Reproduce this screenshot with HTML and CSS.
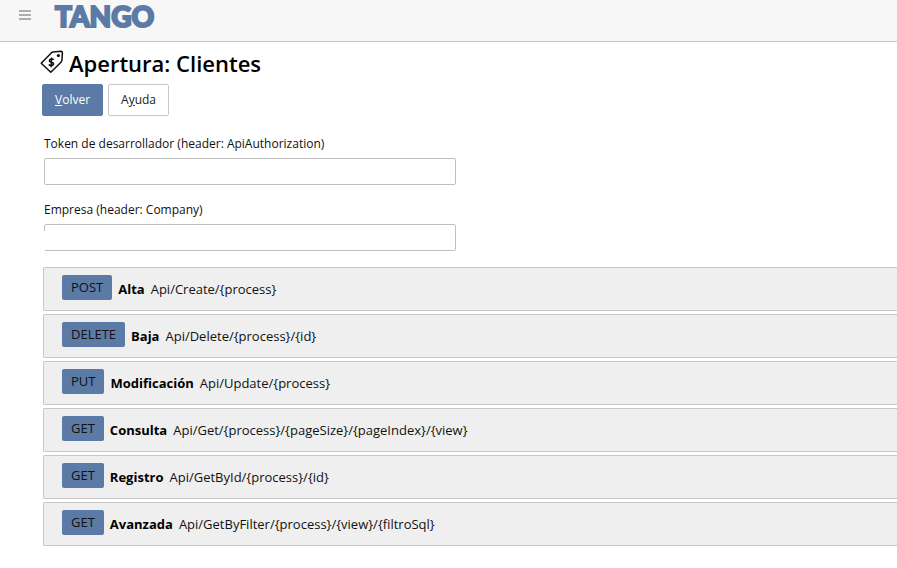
FILE: index.html
```html
<!DOCTYPE html>
<html lang="es">
<head>
<meta charset="utf-8">
<meta name="viewport" content="width=device-width, initial-scale=1">
<title>Apertura: Clientes</title>
<link rel="stylesheet" href="styles.css">
</head>
<body>
<header class="topbar">
  <button class="menu" type="button" aria-label="Menú">
    <svg width="12" height="10" viewBox="0 0 12 10" aria-hidden="true"><path d="M0 1h12M0 5h12M0 9h12" stroke="#969696" stroke-width="1.6"/></svg>
  </button>
  <a class="brand" href="#">TANGO</a>
</header>
<main class="content">
  <h1 class="title">
    <svg class="tag" width="24" height="24" viewBox="0 0 24 24" fill="none" aria-hidden="true">
      <path d="M1.2 13.2 11.5 2.8Q12.2 2.1 13.2 2L21 1.3Q22.4 1.3 22.4 2.6L21.9 10.2Q21.8 11.4 21 12.2L10.8 22.2Z" stroke="#111" stroke-width="1.5" stroke-linejoin="round"/>
      <circle cx="18.4" cy="5.6" r="1.6" fill="#111"/>
      <path d="M13.7 9.7C12.6 8.5 9.2 8.7 9.4 10.8C9.6 12.6 13.5 11.6 13.5 13.8C13.5 16.1 9.8 15.9 8.8 14.6M11.6 7.5 11.1 17.2" stroke="#111" stroke-width="1.6"/>
    </svg>
    Apertura: Clientes
  </h1>
  <div class="actions">
    <button class="btn btn-primary" type="button"><u>V</u>olver</button>
    <button class="btn" type="button">A<u>y</u>uda</button>
  </div>
  <form class="fields">
    <div class="field">
      <label for="token">Token de desarrollador (header: ApiAuthorization)</label>
      <div class="box"><input id="token" type="text"></div>
    </div>
    <div class="field">
      <label for="company">Empresa (header: Company)</label>
      <div class="box box-open"><input id="company" type="text"></div>
    </div>
  </form>
  <ul class="endpoints">
    <li class="endpoint"><span class="method">POST</span><strong>Alta</strong><span>Api/Create/{process}</span></li>
    <li class="endpoint"><span class="method">DELETE</span><strong>Baja</strong><span>Api/Delete/{process}/{id}</span></li>
    <li class="endpoint"><span class="method">PUT</span><strong>Modificación</strong><span>Api/Update/{process}</span></li>
    <li class="endpoint"><span class="method">GET</span><strong>Consulta</strong><span>Api/Get/{process}/{pageSize}/{pageIndex}/{view}</span></li>
    <li class="endpoint"><span class="method">GET</span><strong>Registro</strong><span>Api/GetById/{process}/{id}</span></li>
    <li class="endpoint"><span class="method">GET</span><strong>Avanzada</strong><span>Api/GetByFilter/{process}/{view}/{filtroSql}</span></li>
  </ul>
</main>
</body>
</html>
```
FILE: styles.css
```css
* { box-sizing: border-box; }

body {
  margin: 0;
  background: #fff;
  color: #111;
  font: 13px/18px "Open Sans", "Noto Sans", sans-serif;
}

.topbar {
  display: flex;
  align-items: flex-start;
  gap: 24px;
  height: 42px;
  padding-left: 19px;
  background: #f7f7f7;
  border-bottom: 1px solid #c8c8c8;
}

.menu {
  display: flex;
  padding: 10px 0;
  border: 0;
  background: none;
}

.brand {
  color: #5b7ba6;
  font: 900 28px/32px Lato, sans-serif;
  text-decoration: none;
  -webkit-text-stroke: 2px #5b7ba6;
}

.content { padding: 7px 0 20px 43px; }

.title {
  display: flex;
  align-items: center;
  gap: 5px;
  margin: 0 0 7px -3px;
  color: #000;
  font-size: 22px;
  font-weight: 600;
  line-height: 28px;
}

.tag { margin-bottom: 3px; }

.actions {
  display: flex;
  gap: 5px;
  margin: 0 0 19px -1px;
}

.btn {
  height: 32px;
  padding: 0 12px;
  border: 1px solid #c8c8c8;
  border-radius: 2px;
  background: #fff;
  color: #222;
  font: inherit;
  font-size: 12px;
}

.btn-primary {
  border-color: #5b7ba6;
  background: #5b7ba6;
  color: #fff;
}

.fields {
  display: grid;
  gap: 16px;
  margin: 0 0 16px 1px;
}

.field {
  display: grid;
  gap: 5px;
  max-width: 412px;
  font-size: 12px;
}

.box {
  position: relative;
  display: grid;
}

.box input {
  width: 100%;
  height: 27px;
  padding: 0 8px;
  border: 1px solid #c0c0c0;
  border-radius: 2px;
  font: inherit;
}

/* The left edge is hidden below the top corner. */
.box-open::before {
  content: "";
  position: absolute;
  top: 7px;
  bottom: 1px;
  left: 0;
  width: 1px;
  background: #fff;
}

.endpoints {
  display: grid;
  gap: 3px;
  margin: 0;
  padding: 0;
  list-style: none;
}

.endpoint {
  display: flex;
  align-items: center;
  gap: 6px;
  min-height: 44px;
  padding-left: 18px;
  border: 1px solid #c8c8c8;
  border-right: 0;
  border-radius: 2px 0 0 2px;
  background: #efefef;
}

.endpoint strong { color: #000; }

.method {
  margin-bottom: 3px;
  padding: 3px 9px;
  border-radius: 2px;
  background: #5b7ba6;
  line-height: 19px;
}
```
